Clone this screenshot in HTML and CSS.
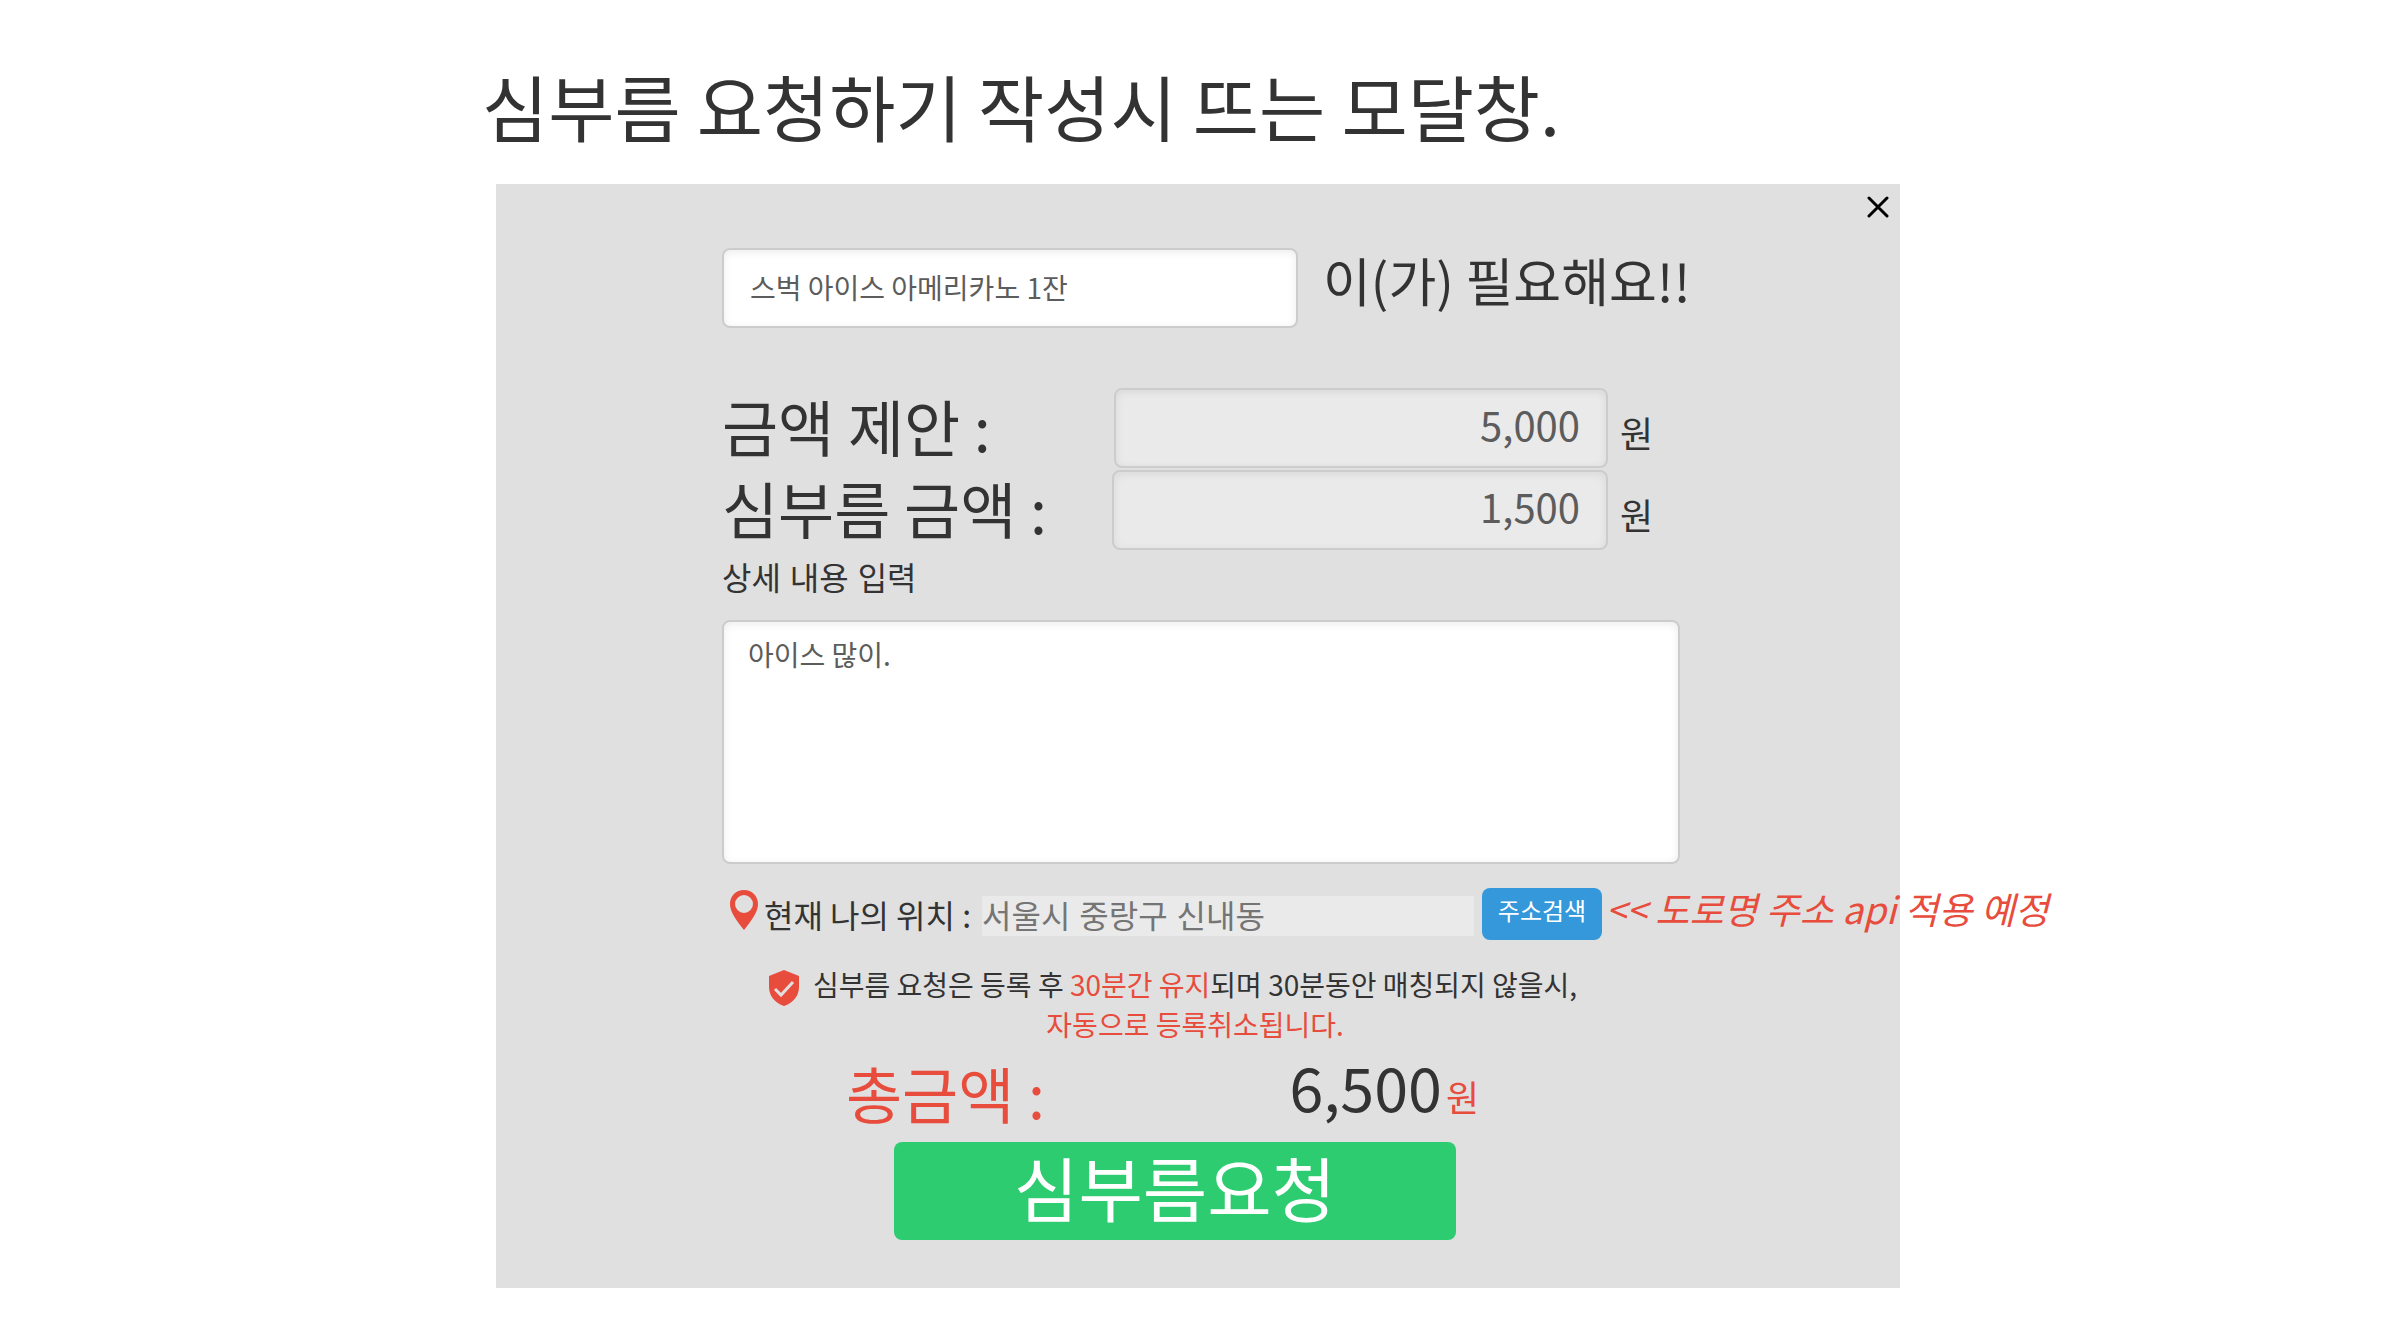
FILE: index.html
```html
<!DOCTYPE html>
<html>
<head>
<meta charset="utf-8">
<meta name="viewport" content="width=device-width, initial-scale=1">
<title>심부름 요청하기</title>
<link rel="stylesheet" href="styles.css">
</head>
<body>
<main class="page">
  <h1 class="page-title">심부름 요청하기 작성시 뜨는 모달창.</h1>

  <form class="modal">
    <button class="close" type="button" aria-label="닫기">
      <svg class="close-icon" viewBox="0 0 22 22" aria-hidden="true"><path d="M2 2L20 20M20 2L2 20"/></svg>
    </button>

    <div class="modal-body">
      <div class="item-row">
        <input class="field item-field" id="item" type="text" value="스벅 아이스 아메리카노 1잔">
        <label class="item-label" for="item">이(가) 필요해요!!</label>
      </div>

      <div class="prices">
        <div class="price-row">
          <label class="price-label" for="offer">금액 제안 :</label>
          <input class="field price-field price-field-offer" id="offer" type="text" value="5,000">
          <span class="unit">원</span>
        </div>
        <div class="price-row">
          <label class="price-label" for="fee">심부름 금액 :</label>
          <input class="field price-field" id="fee" type="text" value="1,500">
          <span class="unit">원</span>
        </div>
      </div>

      <label class="detail-label" for="detail" lang="ko">상세 내용 입력</label>
      <textarea class="field detail-field" id="detail">아이스 많이.</textarea>

      <div class="location-row">
        <svg class="pin-icon" viewBox="0 0 28 40" aria-hidden="true"><path fill-rule="evenodd" d="M14 0C6 0 0 6 0 14C0 21 5 29 14 40C23 29 28 21 28 14C28 6 22 0 14 0ZM14 5A9 9 0 1 1 14 23A9 9 0 1 1 14 5Z"/></svg>
        <label class="location-label" for="address">현재 나의 위치 :</label>
        <input class="address-field" id="address" type="text" lang="ko" value="서울시 중랑구 신내동">
        <button class="search-button" type="button">주소검색</button>
        <em class="memo">&lt;&lt; 도로명 주소 api 적용 예정</em>
      </div>

      <div class="notice">
        <svg class="shield-icon" viewBox="0 0 30 36" aria-hidden="true"><path class="shield" d="M15 0L30 6V17C30 26 24 33 15 36C6 33 0 26 0 17V6Z"/><path class="check" d="M6 19L12 25L24 12"/></svg>
        <p class="notice-text">심부름 요청은 등록 후 <span class="accent">30분간 유지</span>되며 30분동안 매칭되지 않을시,<br><span class="accent">자동으로 등록취소됩니다.</span></p>
      </div>

      <div class="total-row">
        <span class="total-label">총금액 :</span>
        <span class="total-sum"><output class="total-value">6,500</output><span class="total-unit">원</span></span>
      </div>

      <div class="actions">
        <button class="submit-button" type="submit">심부름요청</button>
      </div>
    </div>
  </form>
</main>
</body>
</html>
```
FILE: styles.css
```css
* {
  box-sizing: border-box;
}

body {
  margin: 0;
  background: #fff;
  color: #333;
  font-family: "Noto Sans CJK KR", sans-serif;
  font-size: 28px;
  line-height: 40px;
}

input,
textarea,
button {
  margin: 0;
  font-family: inherit;
}

.page {
  display: grid;
  grid-template-columns: 124fr 351fr 125fr;
  padding-top: 53px;
}

.page-title {
  grid-column: 2;
  margin: 0 0 27px -14px;
  font-size: 72px;
  font-weight: 400;
  line-height: 104px;
  white-space: nowrap;
}

.modal {
  grid-column: 2;
  position: relative;
  display: grid;
  grid-template-columns: 113fr 479fr 110fr;
  padding: 64px 0 48px;
  background: #e0e0e0;
}

.modal-body {
  grid-column: 2;
  min-width: 0;
}

.close {
  position: absolute;
  top: 12px;
  right: 11px;
  padding: 0;
  border: 0;
  background: none;
  line-height: 0;
}

.close-icon {
  width: 22px;
  height: 22px;
  fill: none;
  stroke: #000;
  stroke-width: 3;
  stroke-linecap: round;
}

.field {
  border: 2px solid #ccc;
  border-radius: 8px;
  background: #fff;
  box-shadow: inset 0 2px 8px rgba(0, 0, 0, 0.08);
  color: #5c5c5c;
  font-size: 28px;
}

.item-row {
  display: grid;
  grid-template-columns: minmax(0, 288fr) minmax(0, 191fr);
  margin-bottom: 60px;
}

.item-field {
  width: 100%;
  height: 80px;
  padding: 0 26px 2px;
}

.item-label {
  padding-left: 25px;
  font-size: 52px;
  line-height: 64px;
  white-space: nowrap;
}

.prices {
  display: grid;
  gap: 2px;
}

.price-row {
  display: flex;
  align-items: center;
}

.price-label {
  flex: 1;
  padding-bottom: 4px;
  font-size: 61px;
  line-height: 76px;
  white-space: nowrap;
}

.price-field {
  width: 496px;
  height: 80px;
  padding: 0 26px 8px;
  background: #eaeaea;
  font-size: 40px;
  text-align: right;
}

.price-field-offer {
  width: 494px;
}

.unit {
  width: 72px;
  padding: 8px 0 0 12px;
  font-size: 36px;
}

.detail-label {
  display: block;
  margin-bottom: 18px;
  font-size: 32px;
  line-height: 52px;
}

.detail-field {
  display: block;
  width: 100%;
  height: 244px;
  padding: 12px 24px;
  line-height: 40px;
  resize: none;
}

.location-row {
  display: flex;
  align-items: center;
  height: 52px;
  margin-top: 24px;
  padding: 0 74px 0 8px;
  white-space: nowrap;
}

.pin-icon {
  flex: none;
  width: 28px;
  height: 40px;
  margin-right: 6px;
  margin-bottom: 8px;
  fill: #e74c3c;
}

.location-label {
  flex: none;
  width: 218px;
  font-size: 32px;
}

.address-field {
  flex: 1;
  min-width: 0;
  height: 40px;
  margin-top: 4px;
  padding: 0 0 4px;
  border: 0;
  background: #eaeaea;
  color: #757575;
  font-size: 32px;
}

.search-button {
  flex: none;
  width: 120px;
  height: 52px;
  margin: 0 4px 0 8px;
  padding: 0 0 10px;
  border: 0;
  border-radius: 8px;
  background: #3498db;
  color: #fff;
  font-size: 24px;
}

.memo {
  width: 0;
  padding-bottom: 12px;
  color: #e74c3c;
  font-size: 37px;
}

.notice {
  display: flex;
  gap: 14px;
  margin-top: 24px;
  padding-left: 47px;
}

.shield-icon {
  flex: none;
  width: 30px;
  height: 36px;
  margin-top: 6px;
}

.shield {
  fill: #e74c3c;
}

.check {
  fill: none;
  stroke: #e0e0e0;
  stroke-width: 3;
}

.notice-text {
  margin: 0;
  text-align: center;
  white-space: nowrap;
}

.accent {
  color: #e74c3c;
}

.total-row {
  display: flex;
  justify-content: space-between;
  align-items: center;
  height: 98px;
  padding: 0 201px 0 124px;
  white-space: nowrap;
}

.total-label {
  color: #e74c3c;
  font-size: 61px;
}

.total-sum {
  display: flex;
  align-items: baseline;
  gap: 4px;
  padding-bottom: 4px;
}

.total-value {
  font-size: 61px;
}

.total-unit {
  color: #e74c3c;
  font-size: 36px;
}

.actions {
  display: grid;
  padding: 0 224px 0 172px;
}

.submit-button {
  height: 98px;
  padding: 0 0 8px;
  border: 0;
  border-radius: 8px;
  background: #2ecc71;
  color: #fff;
  font-size: 70px;
  line-height: 90px;
}
```
